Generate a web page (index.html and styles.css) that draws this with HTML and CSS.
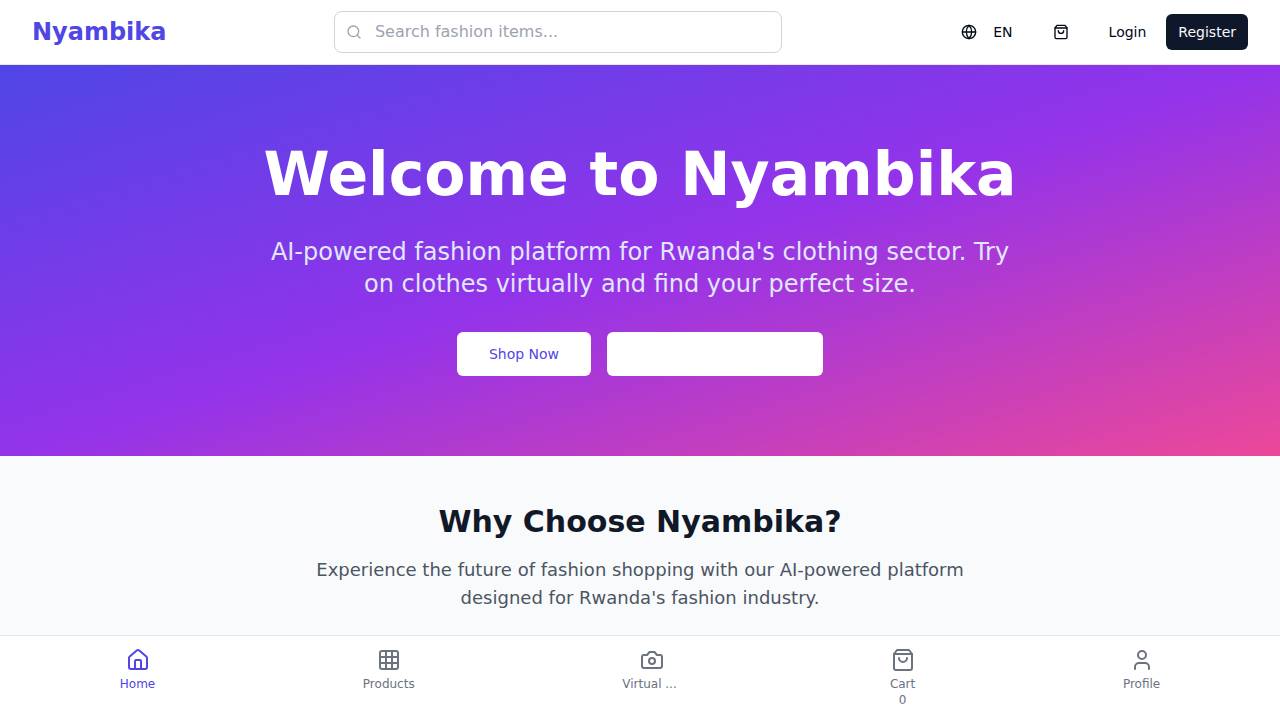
FILE: index.html
```html
<!DOCTYPE html>
<html lang="en">
<head>
  <meta charset="utf-8">
  <meta name="viewport" content="width=device-width, initial-scale=1">
  <title>Nyambika</title>
  <link rel="stylesheet" href="styles.css">
</head>
<body>
  <header class="site-header">
    <div class="header-bar">
      <a class="logo" href="#">Nyambika</a>
      <form class="search" role="search">
        <svg class="icon icon-sm search-icon" viewBox="0 0 24 24" aria-hidden="true"><circle cx="11" cy="11" r="8"/><path d="m21 21-4.3-4.3"/></svg>
        <input class="search-input" type="text" placeholder="Search fashion items..." aria-label="Search fashion items">
      </form>
      <div class="actions">
        <button class="btn btn-lang" type="button">
          <svg class="icon icon-sm" viewBox="0 0 24 24" aria-hidden="true"><circle cx="12" cy="12" r="10"/><path d="M12 2a14.5 14.5 0 0 0 0 20 14.5 14.5 0 0 0 0-20"/><path d="M2 12h20"/></svg>
          EN
        </button>
        <button class="btn" type="button" aria-label="Cart">
          <svg class="icon icon-sm" viewBox="0 0 24 24" aria-hidden="true"><path d="M6 2 3 6v14a2 2 0 0 0 2 2h14a2 2 0 0 0 2-2V6l-3-4Z"/><path d="M3 6h18"/><path d="M16 10a4 4 0 0 1-8 0"/></svg>
        </button>
        <div class="auth">
          <button class="btn" type="button">Login</button>
          <button class="btn btn-dark" type="button">Register</button>
        </div>
      </div>
    </div>
  </header>

  <main class="page">
    <section class="hero">
      <h1 class="hero-title">Welcome to Nyambika</h1>
      <p class="hero-text">AI-powered fashion platform for Rwanda's clothing sector. Try on clothes virtually and find your perfect size.</p>
      <div class="hero-actions">
        <button class="btn btn-hero" type="button">Shop Now</button>
        <button class="btn btn-hero btn-wide" type="button" aria-label="Virtual Try-On"></button>
      </div>
    </section>
    <section class="features">
      <h2 class="features-title">Why Choose Nyambika?</h2>
      <p class="features-text">Experience the future of fashion shopping with our AI-powered platform designed for Rwanda's fashion industry.</p>
    </section>
  </main>

  <nav class="tabbar" aria-label="Main">
    <a class="tab tab-active" href="#">
      <svg class="icon" viewBox="0 0 24 24" aria-hidden="true"><path d="M15 21v-8a1 1 0 0 0-1-1h-4a1 1 0 0 0-1 1v8"/><path d="M3 10a2 2 0 0 1 .709-1.528l7-5.999a2 2 0 0 1 2.582 0l7 5.999A2 2 0 0 1 21 10v9a2 2 0 0 1-2 2H5a2 2 0 0 1-2-2z"/></svg>
      <span class="tab-label">Home</span>
    </a>
    <a class="tab" href="#">
      <svg class="icon" viewBox="0 0 24 24" aria-hidden="true"><rect width="18" height="18" x="3" y="3" rx="2"/><path d="M3 9h18M3 15h18M9 3v18M15 3v18"/></svg>
      <span class="tab-label">Products</span>
    </a>
    <a class="tab" href="#" aria-label="Virtual Try-On">
      <svg class="icon" viewBox="0 0 24 24" aria-hidden="true"><path d="M14.5 4h-5L7 7H4a2 2 0 0 0-2 2v9a2 2 0 0 0 2 2h16a2 2 0 0 0 2-2V9a2 2 0 0 0-2-2h-3l-2.5-3z"/><circle cx="12" cy="13" r="3"/></svg>
      <span class="tab-label tab-label-short">Virtual ...</span>
    </a>
    <a class="tab" href="#">
      <svg class="icon" viewBox="0 0 24 24" aria-hidden="true"><path d="M6 2 3 6v14a2 2 0 0 0 2 2h14a2 2 0 0 0 2-2V6l-3-4Z"/><path d="M3 6h18"/><path d="M16 10a4 4 0 0 1-8 0"/></svg>
      <span class="tab-label">Cart</span>
      <span class="tab-count">0</span>
    </a>
    <a class="tab" href="#">
      <svg class="icon" viewBox="0 0 24 24" aria-hidden="true"><path d="M19 21v-2a4 4 0 0 0-4-4H9a4 4 0 0 0-4 4v2"/><circle cx="12" cy="7" r="4"/></svg>
      <span class="tab-label">Profile</span>
    </a>
  </nav>
</body>
</html>
```
FILE: styles.css
```css
*,
*::before,
*::after {
  box-sizing: border-box;
}

body {
  margin: 0;
  font-family: "DejaVu Sans", sans-serif;
  font-size: 16px;
  line-height: 24px;
  color: #020817;
  background: #f9fafb;
}

h1,
h2,
p {
  margin: 0;
}

a {
  color: inherit;
  text-decoration: none;
}

.icon {
  display: block;
  flex: none;
  width: 24px;
  height: 24px;
  fill: none;
  stroke: currentColor;
  stroke-width: 2;
  stroke-linecap: round;
  stroke-linejoin: round;
}

.icon-sm {
  width: 16px;
  height: 16px;
}

/* Header */
.site-header {
  position: fixed;
  top: 0;
  left: 0;
  right: 0;
  z-index: 10;
  background: #fff;
  border-bottom: 1px solid #e5e7eb;
}

.header-bar {
  display: flex;
  align-items: center;
  justify-content: space-between;
  height: 64px;
  padding: 0 32px;
}

.logo {
  font-size: 24px;
  line-height: 32px;
  font-weight: 700;
  color: #4f46e5;
}

.search {
  position: relative;
  flex: 0 1 448px;
}

.search-icon {
  position: absolute;
  top: 13px;
  left: 12px;
  color: #9ca3af;
}

.search-input {
  display: block;
  width: 100%;
  padding: 8px 16px 8px 40px;
  border: 1px solid #d1d5db;
  border-radius: 8px;
  background: #fff;
  font: inherit;
  color: inherit;
}

.search-input::placeholder {
  color: #9ca3af;
  opacity: 1;
}

.actions {
  display: flex;
  align-items: center;
  gap: 16px;
}

.auth {
  display: flex;
  gap: 8px;
}

.btn {
  display: inline-flex;
  align-items: center;
  justify-content: center;
  height: 36px;
  padding: 0 12px;
  border: 0;
  border-radius: 6px;
  background: transparent;
  font: inherit;
  font-size: 14px;
  line-height: 20px;
  color: inherit;
  cursor: pointer;
}

.btn-lang {
  gap: 16px;
}

.btn-dark {
  background: #0f172a;
  color: #f8fafc;
}

/* Content */
.page {
  padding-top: 64px;
}

.hero {
  display: flex;
  flex-direction: column;
  align-items: center;
  gap: 32px;
  padding: 80px 32px;
  text-align: center;
  color: #fff;
  background: linear-gradient(to bottom right, #4f46e5, #9333ea, #ec4899);
}

.hero-title {
  font-size: 60px;
  line-height: 60px;
  font-weight: 700;
}

.hero-text {
  max-width: 768px;
  font-size: 24px;
  line-height: 32px;
  color: #e0e7ff;
}

.hero-actions {
  display: flex;
  gap: 16px;
}

.btn-hero {
  height: 44px;
  padding: 0 32px;
  background: #fff;
  color: #4f46e5;
}

.btn-wide {
  min-width: 216px;
}

.features {
  display: flex;
  flex-direction: column;
  align-items: center;
  gap: 16px;
  padding: 48px 32px;
  text-align: center;
}

.features-title {
  font-size: 30px;
  line-height: 36px;
  font-weight: 700;
  color: #111827;
}

.features-text {
  max-width: 672px;
  font-size: 18px;
  line-height: 28px;
  color: #4b5563;
}

/* Bottom navigation */
.tabbar {
  position: fixed;
  left: 0;
  right: 0;
  bottom: 0;
  z-index: 10;
  display: flex;
  align-items: flex-start;
  justify-content: space-around;
  padding: 12px 16px;
  background: #fff;
  border-top: 1px solid #e5e7eb;
}

.tab {
  display: flex;
  flex-direction: column;
  align-items: center;
  font-size: 12px;
  line-height: 16px;
  color: #6b7280;
}

.tab-active {
  color: #4f46e5;
}

.tab-label {
  margin-top: 4px;
  white-space: nowrap;
}

.tab-label-short {
  width: 60px;
}
```
